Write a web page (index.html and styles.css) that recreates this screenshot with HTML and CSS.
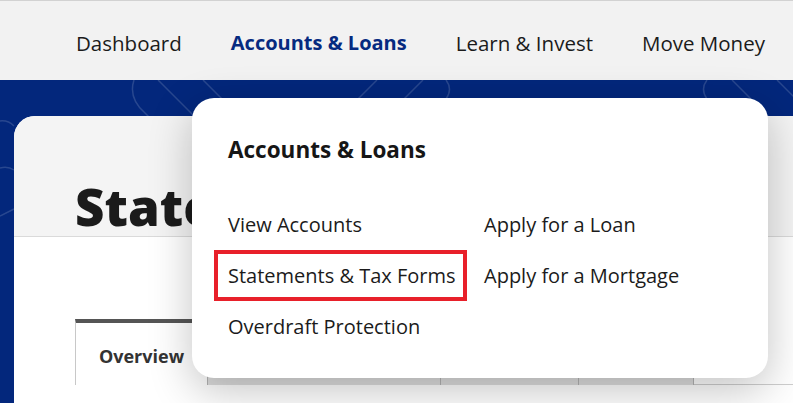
FILE: index.html
```html
<!DOCTYPE html>
<html lang="en">
<head>
  <meta charset="UTF-8" />
  <meta name="viewport" content="width=device-width, initial-scale=1.0" />
  <title>Statements &amp; Tax Forms</title>
  <link rel="stylesheet" href="styles.css">
</head>
<body>
  <header class="topnav">
    <nav class="topnav-links">
      <a href="#">Dashboard</a>
      <a href="#" class="active">Accounts &amp; Loans</a>
      <a href="#">Learn &amp; Invest</a>
      <a href="#">Move Money</a>
    </nav>
  </header>

  <main class="banner">
    <svg class="banner-pattern" viewBox="0 0 793 323" preserveAspectRatio="none" aria-hidden="true">
      <path d="M134 0 Q128 18 145 33 L175 63" />
      <path d="M158 0 L200 42" />
      <path d="M203 0 L240 37" />
      <path d="M377 0 L340 37" />
      <path d="M423 0 L386 37" />
      <path d="M446 0 Q453 9 446 19" />
      <path d="M707 0 Q700 9 707 19" />
      <path d="M732 0 L770 38" />
      <path d="M777 0 L815 38" />
      <path d="M0 41 Q8 40 14 46" />
      <path d="M0 88 Q8 86 14 90" />
      <path d="M0 136 Q8 132 14 129" />
    </svg>

    <section class="card">
      <div class="card-head">
        <h1>Statements &amp; Tax Forms</h1>
      </div>
      <div class="card-body">
        <div class="tabs">
          <a href="#" class="tab active">Overview</a>
          <a href="#" class="tab wide">Statements &amp; Documents</a>
          <a href="#" class="tab mid">Tax Forms</a>
          <a href="#" class="tab narrow">Notices</a>
        </div>
      </div>
    </section>
  </main>

  <!-- open mega menu under "Accounts & Loans" -->
  <div class="dropdown">
    <h2>Accounts &amp; Loans</h2>
    <div class="dropdown-cols">
      <ul>
        <li><a href="#">View Accounts</a></li>
        <li><a href="#" class="focused">Statements &amp; Tax Forms</a></li>
        <li><a href="#">Overdraft Protection</a></li>
      </ul>
      <ul>
        <li><a href="#">Apply for a Loan</a></li>
        <li><a href="#">Apply for a Mortgage</a></li>
      </ul>
    </div>
  </div>
</body>
</html>
```

FILE: styles.css
```css
:root {
  --nav-bg: #f2f2f2;
  --navy: #062a80;
  --banner: #03277c;
  --text: #1b1b1b;
  --focus: #e8202a;
}

* {
  box-sizing: border-box;
  margin: 0;
  padding: 0;
}

html,
body {
  height: 100%;
}

body {
  font-family: 'Open Sans', 'Noto Sans', sans-serif;
  color: var(--text);
  background: #fff;
  display: flex;
  flex-direction: column;
  overflow: hidden;
  position: relative;
}

a {
  color: inherit;
  text-decoration: none;
}

ul {
  list-style: none;
}

/* top navigation */
.topnav {
  height: 80px;
  flex-shrink: 0;
  background: var(--nav-bg);
  border-top: 1px solid #d2d2d2;
}

.topnav-links {
  height: 100%;
  display: flex;
  align-items: center;
  gap: 49px;
  padding: 4px 0 0 76px;
  font-size: 20.5px;
}

.topnav-links a.active {
  color: var(--navy);
  font-size: 20px;
  font-weight: 700;
}

/* blue banner with the page card */
.banner {
  flex: 1;
  background: var(--banner);
  position: relative;
  display: flex;
  flex-direction: column;
  padding: 36px 0 0 14px;
}

.banner-pattern {
  position: absolute;
  top: 0;
  left: 0;
  width: 100%;
  height: 100%;
  fill: none;
  stroke: rgba(255, 255, 255, 0.15);
  stroke-width: 1.5;
}

.card {
  flex: 1;
  position: relative;
  background: #fff;
  border-top-left-radius: 21px;
  overflow: hidden;
}

.card-head {
  height: 121px;
  background: #f4f4f4;
  border-bottom: 1px solid #dadada;
  display: flex;
  align-items: flex-end;
  padding: 0 0 4px 61px;
}

.card-head h1 {
  font-size: 51px;
  font-weight: 800;
  line-height: 1;
  color: #1b1b1b;
  white-space: nowrap;
}

.card-body {
  padding: 82px 0 0 61px;
}

.tabs {
  display: flex;
  height: 66px;
}

.tabs::after {
  content: "";
  flex: 1;
  border-bottom: 1px solid #cfcfcf;
}

.tab {
  display: flex;
  align-items: center;
  justify-content: center;
  font-size: 18px;
  font-weight: 700;
  color: #333;
  background: #dedede;
  border-left: 1px solid #b4b4b4;
  border-top: 4px solid transparent;
}

.tab.active {
  width: 132px;
  background: #fff;
  border-top-color: #555;
  border-left-color: #c8c8c8;
  padding-top: 4px;
}

.tab.wide {
  width: 233px;
}

.tab.mid {
  width: 138px;
}

.tab.narrow {
  width: 116px;
  border-right: 1px solid #b4b4b4;
}

/* mega menu panel */
.dropdown {
  position: absolute;
  top: 98px;
  left: 192px;
  width: 576px;
  height: 280px;
  background: #fff;
  border-radius: 22px;
  box-shadow: 0 12px 44px rgba(0, 0, 0, 0.24);
  padding: 37px 0 0 36px;
  z-index: 10;
}

.dropdown h2 {
  font-size: 22.5px;
  font-weight: 700;
  line-height: 30px;
  color: #161616;
}

.dropdown-cols {
  display: flex;
  margin: 34px 0 0 -14px;
}

.dropdown-cols ul {
  width: 256px;
}

.dropdown-cols a {
  display: inline-block;
  font-size: 20px;
  line-height: 27px;
  padding: 8px 10px;
  border: 4px solid transparent;
  white-space: nowrap;
}

.dropdown-cols a.focused {
  border-color: var(--focus);
  padding-right: 7px;
}
```
